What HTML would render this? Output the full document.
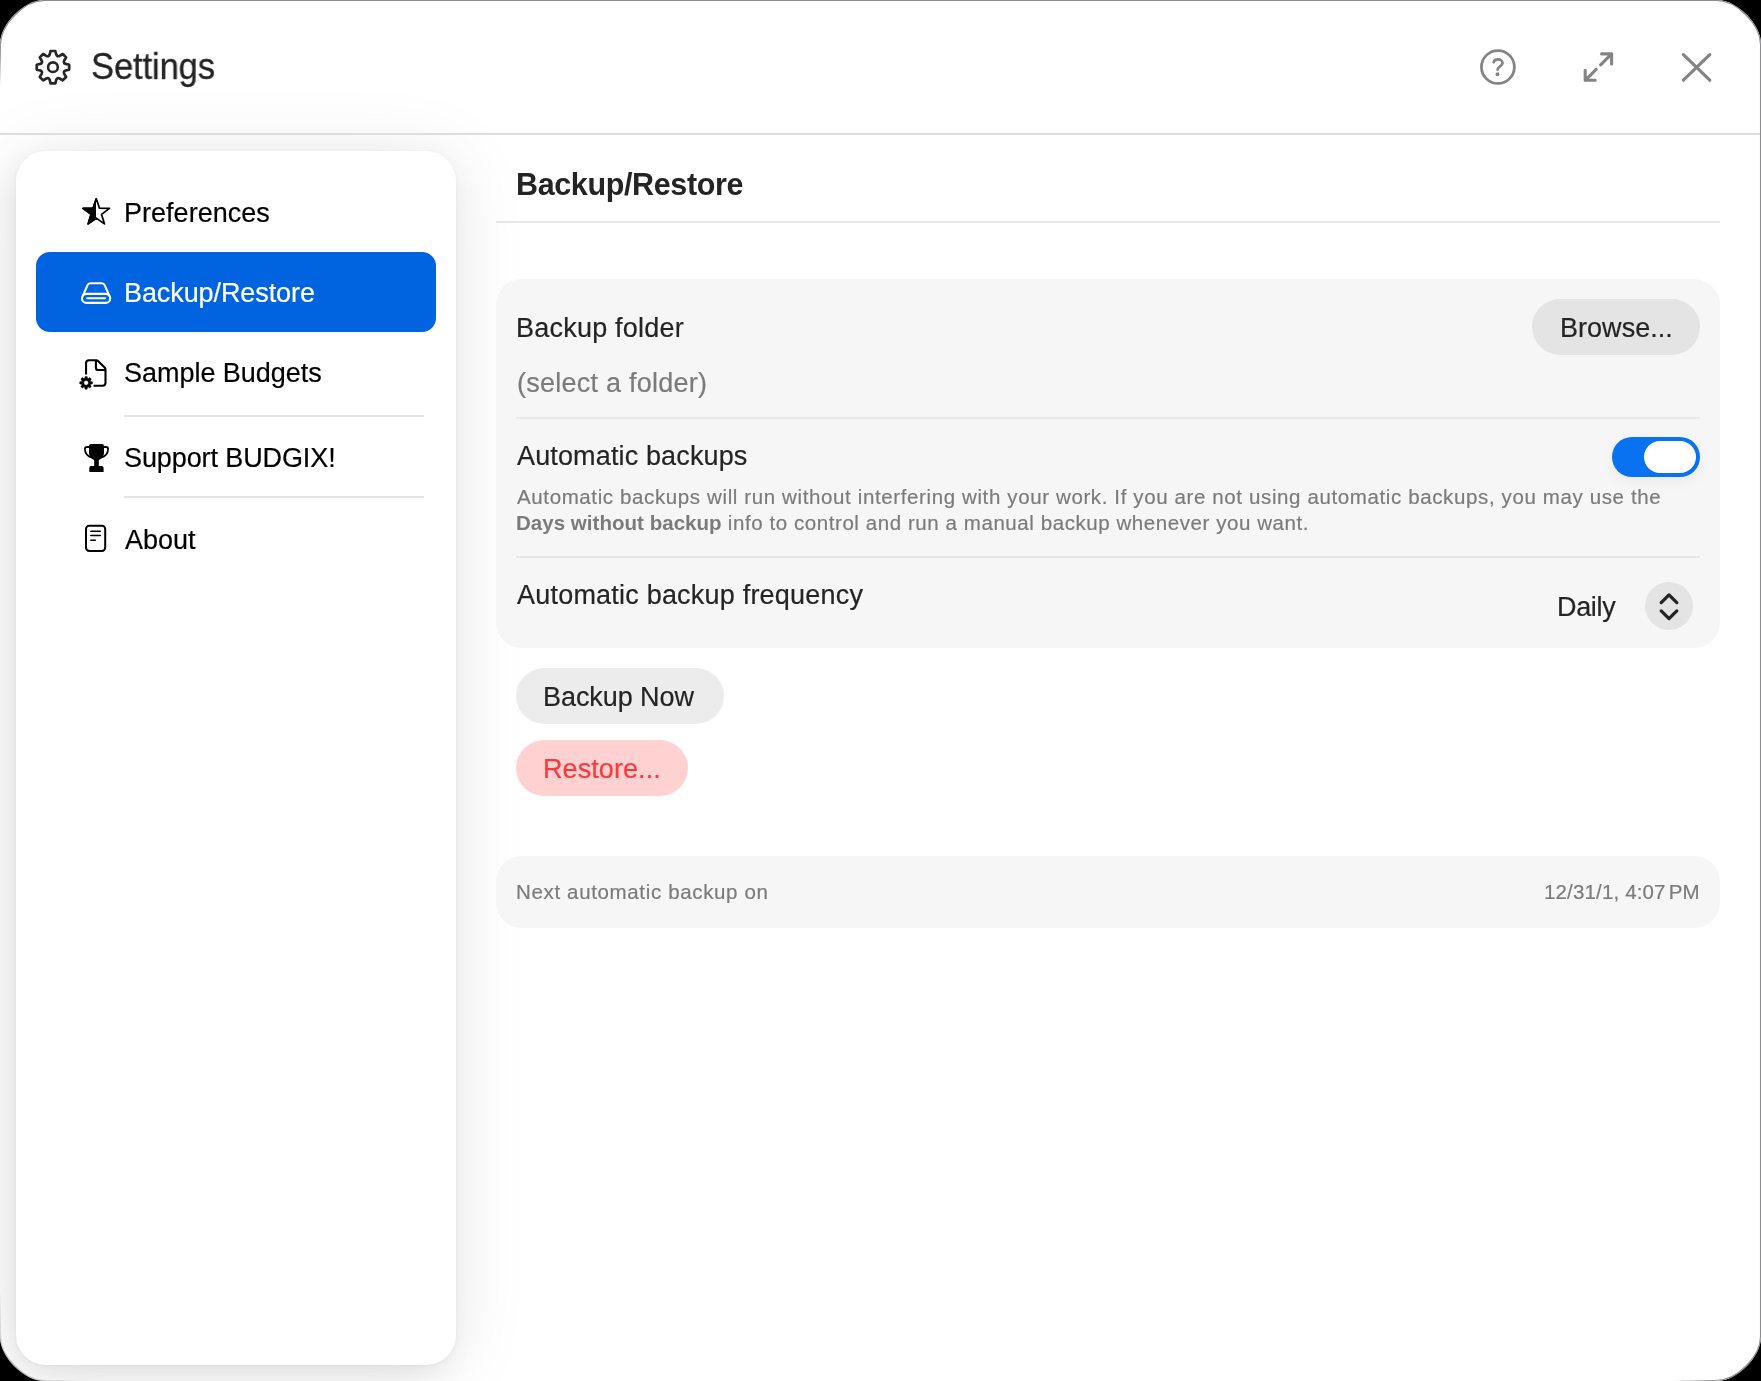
<!DOCTYPE html>
<html>
<head>
<meta charset="utf-8">
<title>Settings</title>
<style>
*{box-sizing:border-box;margin:0;padding:0}
html,body{width:1761px;height:1381px;background:#000;overflow:hidden}
body{font-family:"Liberation Sans",sans-serif;color:#242424;position:relative}
.win{position:absolute;left:0;top:0;width:1761px;height:1381px;background:#fff;overflow:hidden;clip-path:path('M0,44 C0,24.00 24.00,0 44,0 L1717,0 C1737.00,0 1761,24.00 1761,44 L1761,1337 C1761,1357.00 1737.00,1381 1717,1381 L44,1381 C24.00,1381 0,1357.00 0,1337 Z')}
.abs{position:absolute}
.t{position:absolute;white-space:pre;line-height:1;will-change:transform;-webkit-text-stroke:0.2px}
.hdiv{position:absolute;left:0;top:133px;width:1761px;height:2px;background:#dedede}
.side{position:absolute;left:16px;top:151px;width:440px;height:1214px;background:#fff;border-radius:30px;box-shadow:0 1px 5px rgba(0,0,0,.04),0 4px 72px rgba(0,0,0,.10),-6px 12px 26px rgba(0,0,0,.06)}
.sel{position:absolute;left:36px;top:252px;width:400px;height:80px;border-radius:14px;background:#0064e1}
.sdiv{position:absolute;left:124px;width:300px;height:2px;background:#e3e3e3}
.card{position:absolute;left:496px;width:1224px;background:#f6f6f6;border-radius:26px}
.cdiv{position:absolute;left:516px;width:1184px;height:2px;background:#e8e8e8}
.btn{position:absolute;height:56px;border-radius:28px}
svg{position:absolute;overflow:visible}
</style>
</head>
<body>
<div class="win">
  <!-- sidebar panel + shadow -->
  <div class="side"></div>
  <div class="hdiv"></div>

  <!-- header -->
  <div class="t" id="t_settings" style="left:90.8px;top:48.75px;font-size:36px;letter-spacing:-0.12px;transform:scaleX(0.96);transform-origin:0 0;-webkit-text-stroke:0.3px #242424">Settings</div>

  <!-- sidebar rows -->
  <div class="sel"></div>
  <div class="t sb" id="t_pref" style="left:124.1px;top:200.2px;font-size:27px;color:#000;letter-spacing:0.02px">Preferences</div>
  <div class="t sb" id="t_bkr" style="left:124.1px;top:280.2px;font-size:27px;color:#fff;letter-spacing:-0.09px">Backup/Restore</div>
  <div class="t sb" id="t_smp" style="left:123.6px;top:360px;font-size:27px;color:#000;letter-spacing:-0.03px">Sample Budgets</div>
  <div class="sdiv" style="top:415px"></div>
  <div class="t sb" id="t_sup" style="left:123.6px;top:445.2px;font-size:27px;color:#000;letter-spacing:-0.1px">Support BUDGIX!</div>
  <div class="sdiv" style="top:496px"></div>
  <div class="t sb" id="t_abt" style="left:124.6px;top:527.3px;font-size:27px;color:#000;letter-spacing:-0.03px">About</div>

  <!-- content title -->
  <div class="t" id="t_title" style="-webkit-text-stroke:0;left:515.5px;top:169.4px;font-size:30.5px;font-weight:700;letter-spacing:-0.37px">Backup/Restore</div>
  <div class="abs" style="left:496px;top:221px;width:1224px;height:2px;background:#e6e6e6"></div>

  <!-- main card -->
  <div class="card" style="top:279px;height:369px"></div>
  <div class="t" id="t_bf" style="left:515.6px;top:314.8px;font-size:27px;letter-spacing:0.22px">Backup folder</div>
  <div class="btn" style="left:1532px;top:299px;width:168px;background:#e4e4e4"></div>
  <div class="t" id="t_browse" style="left:1559.9px;top:315.2px;font-size:27px;letter-spacing:0.03px">Browse...</div>
  <div class="t" id="t_sel" style="left:517.4px;top:369.8px;font-size:27px;color:#7b7b7b;letter-spacing:0.24px">(select a folder)</div>
  <div class="cdiv" style="top:417px"></div>
  <div class="t" id="t_ab" style="left:517px;top:443px;font-size:27px;letter-spacing:0.14px">Automatic backups</div>
  <div class="t" id="t_d1" style="left:517px;top:487.4px;font-size:20.5px;color:#7b7b7b;letter-spacing:0.62px">Automatic backups will run without interfering with your work. If you are not using automatic backups, you may use the</div>
  <div class="t" id="t_d2" style="left:516px;top:513.4px;font-size:20.5px;color:#7b7b7b"><b id="t_d2b" style="letter-spacing:0.03px;-webkit-text-stroke:0">Days without backup</b><span id="t_d2r" style="letter-spacing:0.57px"> info to control and run a manual backup whenever you want.</span></div>
  <div class="cdiv" style="top:556px"></div>
  <div class="t" id="t_abf" style="left:517px;top:581.5px;font-size:27px;letter-spacing:0.21px">Automatic backup frequency</div>
  <div class="t" id="t_daily" style="left:1557.1px;top:594px;font-size:27px;letter-spacing:-0.33px">Daily</div>
  <div class="abs" style="left:1645px;top:582px;width:48px;height:48px;border-radius:24px;background:#e4e4e4"></div>

  <!-- toggle -->
  <div class="abs" style="left:1612px;top:437px;width:88px;height:40px;border-radius:20px;background:#0872f0;box-shadow:0 4px 14px rgba(0,0,0,.05)"></div>
  <div class="abs" style="left:1644px;top:441px;width:52px;height:32px;border-radius:16px;background:#fff"></div>

  <!-- buttons -->
  <div class="btn" style="left:516px;top:668px;width:208px;background:#ececec"></div>
  <div class="t" id="t_bn" style="left:543.1px;top:684px;font-size:27px;letter-spacing:-0.07px">Backup Now</div>
  <div class="btn" style="left:516px;top:740px;width:172px;background:#ffd1d1"></div>
  <div class="t" id="t_rs" style="left:543.1px;top:755.8px;font-size:27px;color:#ff383c;letter-spacing:0.08px">Restore...</div>

  <!-- footer card -->
  <div class="card" style="top:856px;height:72px"></div>
  <div class="t" id="t_next" style="left:515.9px;top:882.3px;font-size:20.5px;color:#7b7b7b;letter-spacing:0.65px">Next automatic backup on</div>
  <div class="t" id="t_date" style="right:61.3px;top:881.6px;font-size:20.5px;color:#7b7b7b;letter-spacing:0.15px">12/31/1, 4:07<span style="margin-left:3px">PM</span></div>
<svg id="icons" width="1761" height="1381" viewBox="0 0 1761 1381" style="left:0;top:0">
<path d="M49.67,54.52L50.55,50.98L55.35,50.98L56.23,54.52Q57.16,57.04 59.60,55.91L62.73,54.03L66.12,57.42L64.24,60.55Q63.11,62.99 65.63,63.92L69.17,64.80L69.17,69.60L65.63,70.48Q63.11,71.41 64.24,73.85L66.12,76.98L62.73,80.37L59.60,78.49Q57.16,77.36 56.23,79.88L55.35,83.42L50.55,83.42L49.67,79.88Q48.74,77.36 46.30,78.49L43.17,80.37L39.78,76.98L41.66,73.85Q42.79,71.41 40.27,70.48L36.73,69.60L36.73,64.80L40.27,63.92Q42.79,62.99 41.66,60.55L39.78,57.42L43.17,54.03L46.30,55.91Q48.74,57.04 49.67,54.52Z" fill="none" stroke="#262626" stroke-width="2.7" stroke-linejoin="round"/>
<circle cx="52.95" cy="67.2" r="4.85" fill="none" stroke="#262626" stroke-width="2.6"/>
<circle cx="1497.9" cy="67" r="16.45" fill="none" stroke="#848484" stroke-width="2.8"/>
<path d="M1493.7,62.3C1494,60.5 1495.7,59.4 1498,59.4C1500.6,59.4 1502.6,60.9 1502.6,63.1C1502.6,66.4 1497.5,66.3 1497.5,69.7" fill="none" stroke="#848484" stroke-width="2.6" stroke-linecap="round"/>
<circle cx="1497.5" cy="74.3" r="1.95" fill="#848484"/>
<path d="M1600.6,64.9L1611.6,53.9M1601.6,53.9H1611.6V63.9M1596.2,69.3L1585.2,80.3M1585.2,70.3V80.3H1595.2" fill="none" stroke="#848484" stroke-width="3.1" stroke-linecap="round" stroke-linejoin="round"/>
<path d="M1683.4,54.6L1709.8,80.2M1709.8,54.6L1683.4,80.2" fill="none" stroke="#848484" stroke-width="3.2" stroke-linecap="round"/>
<clipPath id="lh"><rect x="70" y="190" width="26" height="45"/></clipPath>
<path d="M96.30,198.75L99.53,208.20L109.52,208.35L101.53,214.35L104.47,223.90L96.30,218.15L88.13,223.90L91.07,214.35L83.08,208.35L93.07,208.20Z" fill="#000" stroke="#000" stroke-width="1.75" stroke-linejoin="round" clip-path="url(#lh)"/>
<path d="M96.30,198.75L99.53,208.20L109.52,208.35L101.53,214.35L104.47,223.90L96.30,218.15L88.13,223.90L91.07,214.35L83.08,208.35L93.07,208.20Z" fill="none" stroke="#000" stroke-width="1.75" stroke-linejoin="round"/>
<rect x="82" y="293.9" width="28.2" height="9" rx="4.5" fill="none" stroke="#fff" stroke-width="2.1"/>
<path d="M82.7,296.2L87.4,285.4Q88.3,283.3 90.6,283.3H101.6Q103.9,283.3 104.8,285.4L109.5,296.2" fill="none" stroke="#fff" stroke-width="2.1" stroke-linejoin="round"/>
<path d="M87.2,298.3H105" fill="none" stroke="#fff" stroke-width="2" stroke-linecap="round"/>
<path d="M86.05,374.4V363.3Q86.05,360.3 89.05,360.3H96.2Q97.4,360.3 98.3,361.2L104.6,367.6Q105.5,368.5 105.5,369.8V382.7Q105.5,385.75 102.4,385.75H93.6" fill="none" stroke="#000" stroke-width="2.1" stroke-linecap="butt" stroke-linejoin="round"/>
<path d="M95.9,360.6V367.7Q95.9,370 98.2,370H105.2" fill="none" stroke="#000" stroke-width="2.1" stroke-linejoin="round"/>
<path d="M84.63,378.33L85.04,376.49A6.45,6.45 0 0 1 87.16,376.49L87.57,378.33A4.75,4.75 0 0 1 88.26,378.62L89.85,377.60A6.45,6.45 0 0 1 91.35,379.10L90.33,380.69A4.75,4.75 0 0 1 90.62,381.38L92.46,381.79A6.45,6.45 0 0 1 92.46,383.91L90.62,384.32A4.75,4.75 0 0 1 90.33,385.01L91.35,386.60A6.45,6.45 0 0 1 89.85,388.10L88.26,387.08A4.75,4.75 0 0 1 87.57,387.37L87.16,389.21A6.45,6.45 0 0 1 85.04,389.21L84.63,387.37A4.75,4.75 0 0 1 83.94,387.08L82.35,388.10A6.45,6.45 0 0 1 80.85,386.60L81.87,385.01A4.75,4.75 0 0 1 81.58,384.32L79.74,383.91A6.45,6.45 0 0 1 79.74,381.79L81.58,381.38A4.75,4.75 0 0 1 81.87,380.69L80.85,379.10A6.45,6.45 0 0 1 82.35,377.60L83.94,378.62A4.75,4.75 0 0 1 84.63,378.33ZM88.45,382.85A2.35,2.35 0 1 0 83.75,382.85A2.35,2.35 0 1 0 88.45,382.85Z" fill="#000" fill-rule="evenodd" stroke="#000" stroke-width="0.4" stroke-linejoin="round"/>
<path d="M89,446.1Q89,444.1 91,444.1H102Q104,444.1 104,446.1V452.5C104,456.5 101.5,458.6 98.8,460.2V466.1H101.8Q103.6,466.1 103.6,467.9V471.9H89.3V467.9Q89.3,466.1 91.1,466.1H94.2V460.2C91.5,458.6 89,456.5 89,452.5Z" fill="#000"/>
<path d="M89.6,447H87Q84.9,447 84.9,449.2C85.2,453.4 87.6,456.4 92,457.6M103.4,447H106Q108.1,447 108.1,449.2C107.8,453.4 105.4,456.4 101,457.6" fill="none" stroke="#000" stroke-width="1.8"/>
<rect x="86" y="525.8" width="19.2" height="25.1" rx="3.3" fill="none" stroke="#000" stroke-width="2"/>
<path d="M90.8,531.3H100.3M90.8,535.6H100.3M90.8,540.2H95.3" fill="none" stroke="#000" stroke-width="1.5" stroke-linecap="round"/>
<path d="M1661.2,602.6L1669,594.9L1676.8,602.6M1661.2,610.9L1669,618.6L1676.8,610.9" fill="none" stroke="#242424" stroke-width="3.3" stroke-linecap="round" stroke-linejoin="round"/>
</svg>
</div>
<svg width="1761" height="1381" viewBox="0 0 1761 1381" style="left:0;top:0">
<defs>
<linearGradient id="g2" gradientUnits="userSpaceOnUse" x1="0" y1="44.5" x2="0" y2="86.5"><stop offset="0" stop-color="#8c8c8e"/><stop offset="1" stop-color="#8c8c8e" stop-opacity="0"/></linearGradient>
<linearGradient id="g3" gradientUnits="userSpaceOnUse" x1="1716.5" y1="0" x2="1674.5" y2="0"><stop offset="0" stop-color="#8c8c8e"/><stop offset="1" stop-color="#8c8c8e" stop-opacity="0"/></linearGradient>
<linearGradient id="g4" gradientUnits="userSpaceOnUse" x1="0" y1="1290.5" x2="84" y2="1380.5"><stop offset="0" stop-color="#8c8c8e" stop-opacity="0"/><stop offset="0.45" stop-color="#8c8c8e" stop-opacity="0.55"/><stop offset="0.6" stop-color="#8c8c8e" stop-opacity="0.55"/><stop offset="1" stop-color="#8c8c8e" stop-opacity="0"/></linearGradient>
</defs>
<path d="M0.5,44.5 C0.5,24.50 24.50,0.5 44.5,0.5 L1716.5,0.5 C1736.50,0.5 1760.5,24.50 1760.5,44.5 L1760.5,1336.5 C1760.5,1356.50 1736.50,1380.5 1716.5,1380.5" fill="none" stroke="#8c8c8e" stroke-width="1.1"/>
<path d="M0.5,44.5 L0.5,86.5" fill="none" stroke="url(#g2)" stroke-width="1.1"/>
<path d="M1716.5,1380.5 L1674.5,1380.5" fill="none" stroke="url(#g3)" stroke-width="1.1"/>
<path d="M0.5,1290.5 L0.5,1336.5 C0.5,1356.50 24.50,1380.5 44.5,1380.5 L84.5,1380.5" fill="none" stroke="url(#g4)" stroke-width="1.1"/>
</svg>
</body>
</html>
